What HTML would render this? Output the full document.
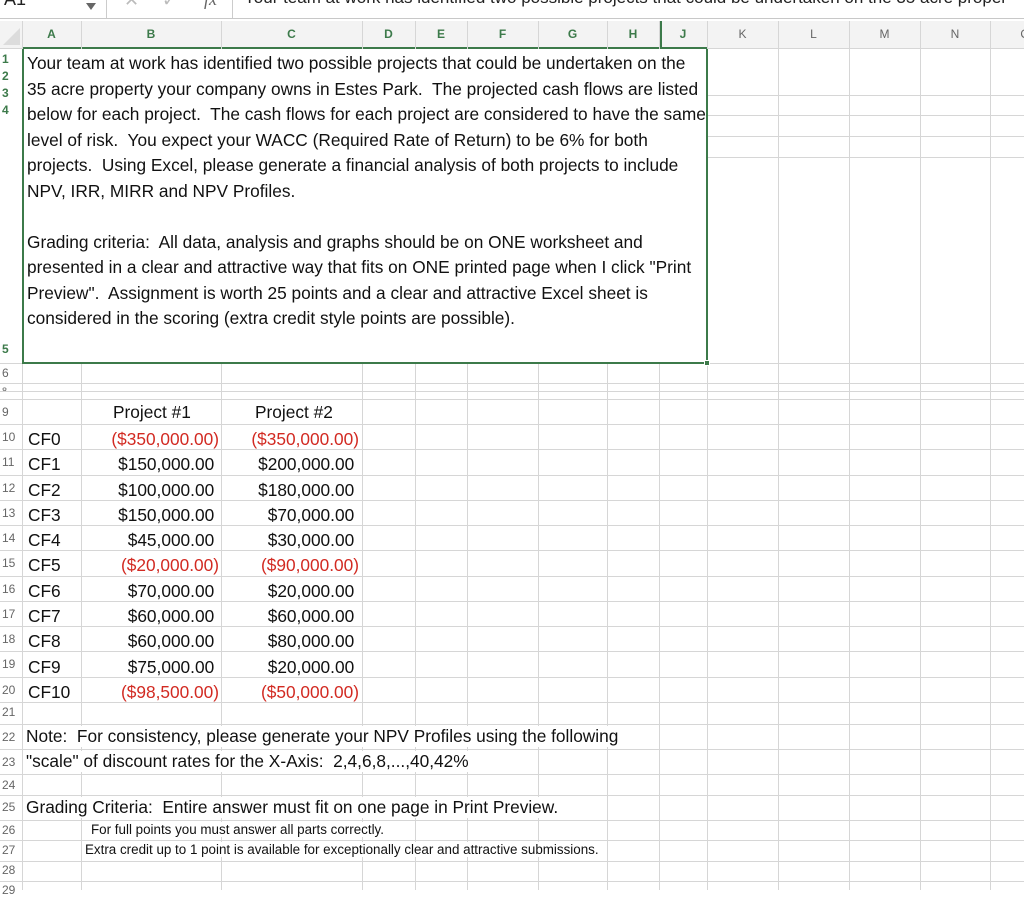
<!DOCTYPE html>
<html><head><meta charset="utf-8"><style>
*{margin:0;padding:0;box-sizing:border-box}
body{width:1024px;height:890px;overflow:hidden;background:#fff;position:relative;font-family:"Liberation Sans",sans-serif}
.a{position:absolute;white-space:nowrap}
.h{position:absolute;left:0;width:1024px;height:1px;background:#d6d6d6}
.v{position:absolute;top:21px;width:1px;height:869px;background:#d6d6d6}
.ch{position:absolute;top:21px;height:27px;line-height:27px;text-align:center;font-size:12px;font-weight:bold;color:#3c7a4a}
.chg{color:#666;font-weight:normal}
.rl{position:absolute;left:0;width:22px;font-size:12px;color:#666;text-align:left;padding-left:2px}
.t{font-size:17.3px;color:#111}
.r{text-align:right}
.red{color:#d22a22}
</style></head><body>
<div class="a" style="left:0;top:0;width:1024px;height:19px;background:#fff;border-bottom:1px solid #c8c8c8"></div>
<div class="a" style="left:4px;top:-11px;font-size:18px;color:#222">A1</div>
<div class="a" style="left:86px;top:3px;width:0;height:0;border-left:5px solid transparent;border-right:5px solid transparent;border-top:7px solid #666"></div>
<div class="a" style="left:106px;top:0;width:1px;height:18px;background:#ccc"></div>
<div class="a" style="left:124px;top:-10px;font-size:18px;color:#bbb">✕</div>
<div class="a" style="left:162px;top:-10px;font-size:18px;color:#bbb">✓</div>
<div class="a" style="left:204px;top:-11px;font-size:18px;color:#666;font-style:italic;font-family:'Liberation Serif',serif">fx</div>
<div class="a" style="left:232px;top:0;width:1px;height:18px;background:#ccc"></div>
<div class="a" style="left:244px;top:-12px;font-size:17px;color:#222;width:780px;overflow:hidden">Your team at work has identified two possible projects that could be undertaken on the 35 acre proper</div>
<div class="a" style="left:0;top:21px;width:1024px;height:28px;background:#f3f3f3;border-bottom:1px solid #d6d6d6"></div>
<div class="a" style="left:3px;top:28px;width:0;height:0;border-left:17px solid transparent;border-bottom:17px solid #dcdcdc"></div>
<div class="a" style="left:22px;top:47px;width:685px;height:2px;background:#3c7a4a"></div>
<div class="v" style="left:22px"></div><div class="v" style="left:81px"></div><div class="v" style="left:221px"></div><div class="v" style="left:362px"></div><div class="v" style="left:415px"></div><div class="v" style="left:467px"></div><div class="v" style="left:538px"></div><div class="v" style="left:607px"></div><div class="v" style="left:659px;width:3px;top:21px;height:28px;background:#3c7a4a"></div><div class="v" style="left:659px"></div><div class="v" style="left:707px"></div><div class="v" style="left:778px"></div><div class="v" style="left:849px"></div><div class="v" style="left:920px"></div><div class="v" style="left:990px"></div>
<div class="h" style="top:95px;left:707px"></div><div class="h" style="top:115px;left:707px"></div><div class="h" style="top:136px;left:707px"></div><div class="h" style="top:157px;left:707px"></div><div class="h" style="top:363px"></div><div class="h" style="top:383px"></div><div class="h" style="top:391px"></div><div class="h" style="top:399px"></div><div class="h" style="top:424px"></div>
<div class="h" style="top:449px"></div><div class="h" style="top:475px"></div><div class="h" style="top:500px"></div><div class="h" style="top:525px"></div><div class="h" style="top:550px"></div><div class="h" style="top:576px"></div><div class="h" style="top:601px"></div><div class="h" style="top:626px"></div><div class="h" style="top:651px"></div><div class="h" style="top:677px"></div><div class="h" style="top:702px"></div><div class="h" style="top:724px"></div><div class="h" style="top:749px"></div><div class="h" style="top:774px"></div><div class="h" style="top:795px"></div><div class="h" style="top:820px"></div><div class="h" style="top:840px"></div><div class="h" style="top:861px"></div><div class="h" style="top:881px"></div>
<div class="ch" style="left:22px;width:59px">A</div><div class="ch" style="left:81px;width:140px">B</div><div class="ch" style="left:221px;width:141px">C</div><div class="ch" style="left:362px;width:53px">D</div><div class="ch" style="left:415px;width:52px">E</div><div class="ch" style="left:467px;width:71px">F</div><div class="ch" style="left:538px;width:69px">G</div><div class="ch" style="left:607px;width:52px">H</div><div class="ch" style="left:659px;width:48px">J</div>
<div class="ch chg" style="left:707px;width:71px">K</div><div class="ch chg" style="left:778px;width:71px">L</div><div class="ch chg" style="left:849px;width:71px">M</div><div class="ch chg" style="left:920px;width:70px">N</div><div class="ch chg" style="left:990px;width:70px">O</div>
<div class="a" style="left:22px;top:49px;width:686px;height:315px;background:#fff;border:2px solid #3c7a4a;border-top:none"></div>
<div class="a" style="left:704px;top:360px;width:6px;height:6px;background:#3c7a4a;border:1px solid #fff"></div>
<div class="a t" style="left:27px;top:51px;line-height:25.5px">Your team at work has identified two possible projects that could be undertaken on the<br>35 acre property your company owns in Estes Park.&nbsp; The projected cash flows are listed<br>below for each project.&nbsp; The cash flows for each project are considered to have the same<br>level of risk.&nbsp; You expect your WACC (Required Rate of Return) to be 6% for both<br>projects.&nbsp; Using Excel, please generate a financial analysis of both projects to include<br>NPV, IRR, MIRR and NPV Profiles.<br><br>Grading criteria:&nbsp; All data, analysis and graphs should be on ONE worksheet and<br>presented in a clear and attractive way that fits on ONE printed page when I click "Print<br>Preview".&nbsp; Assignment is worth 25 points and a clear and attractive Excel sheet is<br>considered in the scoring (extra credit style points are possible).</div>
<div class="rl" style="top:52px;color:#3c7a4a;font-weight:bold">1</div>
<div class="rl" style="top:69px;color:#3c7a4a;font-weight:bold">2</div>
<div class="rl" style="top:86px;color:#3c7a4a;font-weight:bold">3</div>
<div class="rl" style="top:103px;color:#3c7a4a;font-weight:bold">4</div>
<div class="rl" style="top:342px;color:#3c7a4a;font-weight:bold">5</div>
<div class="rl" style="top:366px">6</div>
<div class="rl" style="top:386px;height:5px;overflow:hidden;font-size:9px">8</div>
<div class="rl" style="top:405px">9</div>
<div class="rl" style="top:430px">10</div><div class="rl" style="top:455px">11</div><div class="rl" style="top:481px">12</div><div class="rl" style="top:506px">13</div><div class="rl" style="top:531px">14</div><div class="rl" style="top:556px">15</div><div class="rl" style="top:582px">16</div><div class="rl" style="top:607px">17</div><div class="rl" style="top:632px">18</div><div class="rl" style="top:657px">19</div><div class="rl" style="top:683px">20</div>
<div class="rl" style="top:705px">21</div><div class="rl" style="top:730px">22</div><div class="rl" style="top:755px">23</div><div class="rl" style="top:778px">24</div><div class="rl" style="top:800px">25</div><div class="rl" style="top:823px">26</div><div class="rl" style="top:843px">27</div><div class="rl" style="top:863px">28</div><div class="rl" style="top:883px">29</div>
<div class="a t" style="left:113px;top:402px">Project #1</div>
<div class="a t" style="left:255px;top:402px">Project #2</div>
<div class="a t" style="left:28px;top:427px;line-height:25.3px">CF0<br>CF1<br>CF2<br>CF3<br>CF4<br>CF5<br>CF6<br>CF7<br>CF8<br>CF9<br>CF10</div>
<div class="a t r" style="right:805px;top:427px;line-height:25.3px"><span class="red">($350,000.00)</span><br>$150,000.00&nbsp;<br>$100,000.00&nbsp;<br>$150,000.00&nbsp;<br>$45,000.00&nbsp;<br><span class="red">($20,000.00)</span><br>$70,000.00&nbsp;<br>$60,000.00&nbsp;<br>$60,000.00&nbsp;<br>$75,000.00&nbsp;<br><span class="red">($98,500.00)</span></div>
<div class="a t r" style="right:665px;top:427px;line-height:25.3px"><span class="red">($350,000.00)</span><br>$200,000.00&nbsp;<br>$180,000.00&nbsp;<br>$70,000.00&nbsp;<br>$30,000.00&nbsp;<br><span class="red">($90,000.00)</span><br>$20,000.00&nbsp;<br>$60,000.00&nbsp;<br>$80,000.00&nbsp;<br>$20,000.00&nbsp;<br><span class="red">($50,000.00)</span></div>
<div class="a t" style="left:26px;top:726px;background:#fff;padding-right:3px">Note:&nbsp; For consistency, please generate your NPV Profiles using the following</div>
<div class="a t" style="left:26px;top:751px;background:#fff;padding-right:3px">"scale" of discount rates for the X-Axis:&nbsp; 2,4,6,8,...,40,42%</div>
<div class="a t" style="left:26px;top:797px;background:#fff;padding-right:3px">Grading Criteria:&nbsp; Entire answer must fit on one page in Print Preview.</div>
<div class="a" style="left:91px;top:822px;font-size:13.4px;color:#111;background:#fff">For full points you must answer all parts correctly.</div>
<div class="a" style="left:85px;top:842px;font-size:13.4px;color:#111;background:#fff;padding-right:2px">Extra credit up to 1 point is available for exceptionally clear and attractive submissions.</div>
</body></html>
